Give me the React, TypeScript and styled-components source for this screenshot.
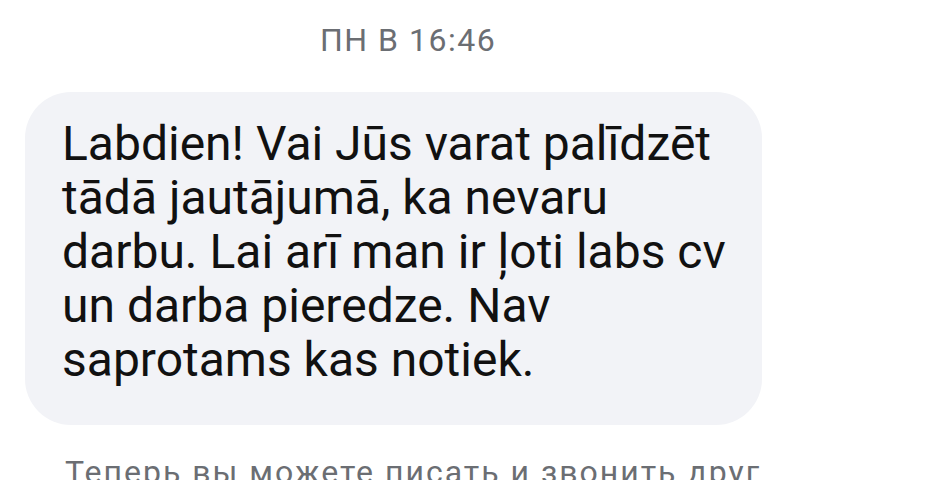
import React from 'react';
import styled, { createGlobalStyle } from 'styled-components';

const GlobalStyle = createGlobalStyle`
  html, body {
    margin: 0;
    padding: 0;
    background: #FFFFFF;
    font-family: Roboto, "Noto Sans", sans-serif;
  }
`
const Page = styled.div`
  display: flex;
  flex-direction: column;
  align-items: flex-start;
  width: 949px;
  height: 480px;
  overflow: hidden;
  padding-left: 25px;
  box-sizing: border-box;
`
const Stamp = styled.div`
  margin: 22px 0 34px 295px;
  font-size: 32px;
  line-height: 36px;
  letter-spacing: 1.5px;
  color: #6B6E73;
  white-space: nowrap;
`
const Bubble = styled.div`
  background: #F2F3F7;
  border-radius: 46px;
  padding: 25px 37px 38px 37px;
  width: 737px;
  box-sizing: border-box;
  font-size: 48px;
  line-height: 54px;
  color: #111111;
  white-space: nowrap;
`
const Notice = styled.div`
  margin: 29px 0 0 40px;
  font-size: 32px;
  line-height: 36px;
  letter-spacing: 2px;
  color: #6B6E73;
  white-space: nowrap;
`
const lines = [
  'Labdien! Vai Jūs varat palīdzēt',
  'tādā jautājumā, ka nevaru',
  'darbu. Lai arī man ir ļoti labs cv',
  'un darba pieredze. Nav',
  'saprotams kas notiek.'
];

export default function App() {
  return (
    <>
      <GlobalStyle />
      <Page>
        <Stamp>ПН В 16:46</Stamp>
        <Bubble>
          {lines.map((line, i) => (
            <div key={i}>{line}</div>
          ))}
        </Bubble>
        <Notice>Теперь вы можете писать и звонить друг</Notice>
      </Page>
    </>
  )
}
